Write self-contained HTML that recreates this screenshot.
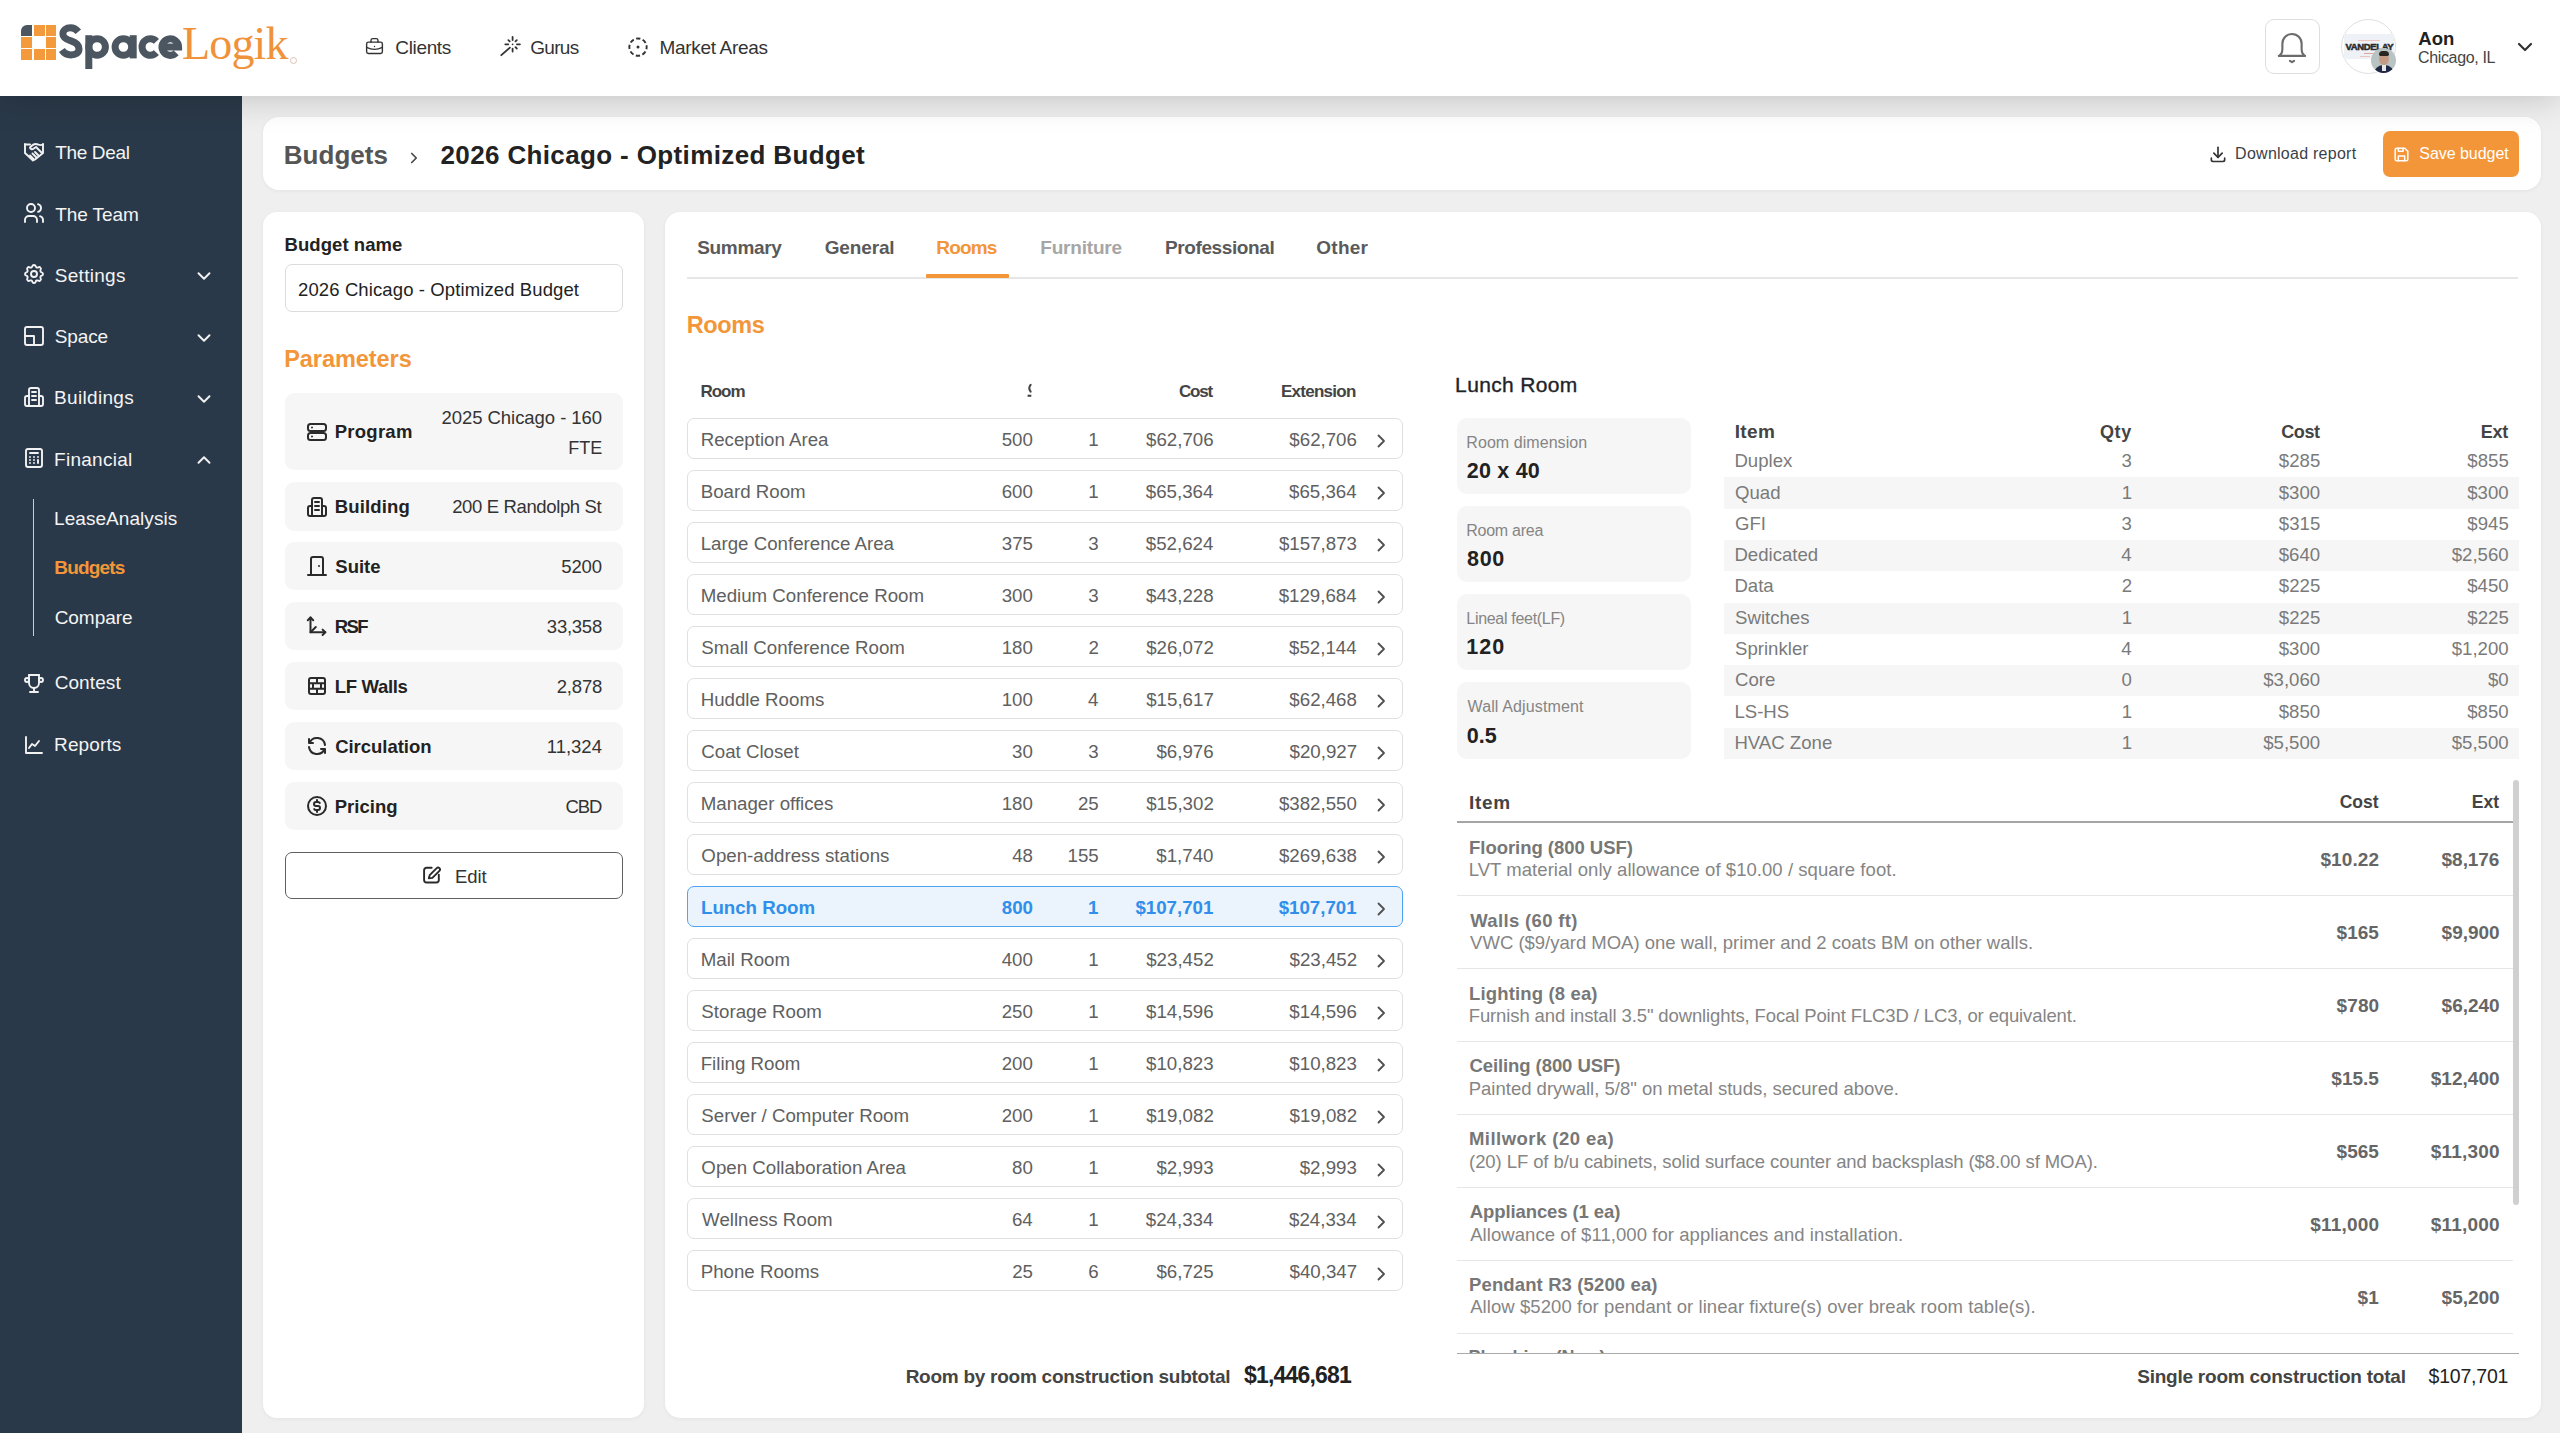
<!DOCTYPE html><html><head><meta charset="utf-8"><style>
html,body{margin:0;padding:0}
body{width:2560px;height:1433px;overflow:hidden;position:relative;background:#efefef;font-family:'Liberation Sans',sans-serif}
.t{position:absolute;white-space:nowrap}
.b{position:absolute;box-sizing:border-box}
</style></head><body>
<div class="b" style="left:0px;top:0px;width:2560px;height:96px;background:#fff;box-shadow:0 0 36px rgba(0,0,0,0.22);z-index:2"></div>
<div class="b" style="left:0;top:0;width:2560px;height:96px;z-index:3">
<div class="b" style="left:21px;top:25px;width:11.2px;height:10.8px;background:#4b5661;border-top-left-radius:6px;"></div><div class="b" style="left:33.6px;top:25px;width:11.0px;height:10.8px;background:#f39a3d;"></div><div class="b" style="left:45.8px;top:25px;width:10.0px;height:10.8px;background:#f39a3d;"></div><div class="b" style="left:21px;top:37px;width:11.2px;height:10.9px;background:#f39a3d;"></div><div class="b" style="left:45.8px;top:37px;width:10.0px;height:10.9px;background:#f39a3d;"></div><div class="b" style="left:21px;top:49px;width:11.2px;height:10.8px;background:#f39a3d;"></div><div class="b" style="left:33.6px;top:49px;width:11.0px;height:10.8px;background:#f39a3d;"></div><div class="b" style="left:45.8px;top:49px;width:10.0px;height:10.8px;background:#f39a3d;"></div>
<svg class="b" style="left:0;top:0" width="200" height="80" viewBox="0 0 200 80" fill="none" stroke="#4b5661" stroke-width="7"><path d="M78.3 31.8 C76.2 29.2 73.6 27.8 70.4 27.8 C66.2 27.8 62.9 30.3 62.9 33.9 C62.9 37.8 66.6 39.4 71 40.9 C75.9 42.5 79 44.9 79 49 C79 52.9 75.7 54.9 70.9 54.9 C66.9 54.9 63.9 53.1 61.9 50"/><path d="M88.8 35.2V69" stroke-linecap="butt"/><circle cx="97.1" cy="47" r="8.3"/><circle cx="123.4" cy="47" r="8.3"/><path d="M133.2 35.2V58.4" stroke-linecap="butt"/><path d="M156.4 41.3 A8.3 8.3 0 1 0 156.4 52.7"/><path d="M163.5 47 H178.6 A8.3 8.3 0 1 0 176.2 52.9"/></svg>
<div class="t " style="left:182.12px;top:21.18px;font-size:46px;line-height:46px;color:#f0923a;font-family:'Liberation Serif', serif;letter-spacing:-0.890px;">Logik</div>
<div class="b" style="left:290px;top:56.5px;width:7px;height:7px;border:1px solid #dcc2b0;border-radius:50%"></div>
<svg class="b" style="left:364px;top:36px" width="21" height="21" viewBox="0 0 24 24" fill="none" stroke="#333" stroke-width="1.6" stroke-linecap="round" stroke-linejoin="round"><rect x="3" y="7" width="18" height="13" rx="2"/><path d="M8 7v-2a2 2 0 0 1 2 -2h4a2 2 0 0 1 2 2v2"/><path d="M12 12v.01"/><path d="M3 13a20 20 0 0 0 18 0"/></svg>
<div class="t " style="left:395.25px;top:37.92px;font-size:19px;line-height:19px;color:#333;font-family:'Liberation Sans', sans-serif;letter-spacing:-0.338px;">Clients</div>
<svg class="b" style="left:498px;top:34px" width="24" height="24" viewBox="0 0 24 24" fill="none" stroke="#333" stroke-width="1.8" stroke-linecap="round" stroke-linejoin="round"><path d="M3.3 21.2L11.9 13.6"/><path d="M14.6 3v3M14.6 14.6v3M7.3 10.3h3M18.9 10.3h3M17.5 7.4l1.3 -1.3M11.7 7.4l-1.3 -1.3M17.5 13.2l1.3 1.3"/><path d="M14.6 10.3v.01"/></svg>
<div class="t " style="left:530.25px;top:37.92px;font-size:19px;line-height:19px;color:#333;font-family:'Liberation Sans', sans-serif;letter-spacing:-0.715px;">Gurus</div>
<svg class="b" style="left:626px;top:35px" width="24" height="24" viewBox="0 0 24 24" fill="none" stroke="#333" stroke-width="1.9" stroke-linecap="round" stroke-linejoin="round"><circle cx="12" cy="12.1" r="8.65" stroke-dasharray="4.3 2.49" stroke-dashoffset="2.15" stroke-linecap="butt"/><circle cx="12" cy="12.1" r="1.5" fill="#333" stroke="none"/></svg>
<div class="t " style="left:659.48px;top:38.22px;font-size:19px;line-height:19px;color:#333;font-family:'Liberation Sans', sans-serif;letter-spacing:-0.320px;">Market Areas</div>
<div class="b" style="left:2265px;top:19px;width:55px;height:55px;border:1.5px solid #dedede;border-radius:9px;background:#fff"></div>
<svg class="b" style="left:2271.3px;top:26.6px" width="42" height="42" viewBox="0 0 24 24" fill="none" stroke="#6b6b6b" stroke-width="1.2" stroke-linecap="round" stroke-linejoin="round"><path d="M4.5 16.5h15c-1.3 -.8 -2 -2.2 -2 -4v-3a5.5 5.5 0 0 0 -11 0v3c0 1.8 -.7 3.2 -2 4z"/><path d="M10.8 19.3l1.2 .8l1.2 -.8"/></svg>
<div class="b" style="left:2341px;top:19px;width:55px;height:55px;border:1.5px solid #e0e0e0;border-radius:50%;background:#fff;overflow:hidden"></div>
<div class="b" style="left:2344px;top:34px;width:50px;height:25px;background:#eef2f7"></div>
<div class="t " style="left:2345.45px;top:41.96px;font-size:9.5px;line-height:9.5px;color:#2a2a2a;font-family:'Liberation Sans', sans-serif;font-weight:700;letter-spacing:-0.356px;-webkit-text-stroke:0.5px #2a2a2a;">VANDELAY</div>
<div class="b" style="left:2358px;top:39.5px;width:22px;height:1px;background:#ecc4be"></div>
<div class="b" style="left:2364px;top:52.5px;width:12px;height:1.5px;background:#e0a49c"></div>
<div class="b" style="left:2360px;top:56px;width:10px;height:1px;background:#ecc4be"></div>
<div class="b" style="left:2371px;top:48px;width:25px;height:25px;border-radius:50%;background:#b9c3c4;overflow:hidden"><div class="b" style="left:8px;top:5px;width:10px;height:12px;border-radius:50%;background:#c49a82"></div><div class="b" style="left:8px;top:3px;width:10px;height:5px;border-radius:5px 5px 2px 2px;background:#2b2522"></div><div class="b" style="left:3px;top:17px;width:20px;height:10px;border-radius:9px 9px 0 0;background:#1f2742"></div><div class="b" style="left:11px;top:17px;width:4px;height:6px;background:#e8e8e8"></div></div>
<div class="t " style="left:2418.34px;top:29.54px;font-size:18.5px;line-height:18.5px;color:#222;font-family:'Liberation Sans', sans-serif;font-weight:700;letter-spacing:0.045px;">Aon</div>
<div class="t " style="left:2418.00px;top:50.36px;font-size:16px;line-height:16px;color:#444;font-family:'Liberation Sans', sans-serif;letter-spacing:-0.348px;">Chicago, IL</div>
<svg class="b" style="left:2513px;top:35px" width="24" height="24" viewBox="0 0 24 24" fill="none" stroke="#333" stroke-width="2.2" stroke-linecap="round" stroke-linejoin="round"><path d="M6 9l6 6l6 -6"/></svg>
</div>
<div class="b" style="left:0px;top:96px;width:242px;height:1337px;background:#2a3949"></div>
<svg class="b" style="left:22px;top:139.6px" width="24" height="24" viewBox="0 0 24 24" fill="none" stroke="#f2f2f2" stroke-width="1.9" stroke-linecap="round" stroke-linejoin="round"><path d="M3 4v9l8 7.5l2 -1l8 -6.5v-9"/><path d="M3 4.5h5"/><path d="M21 4.5c-1.5 .7 -3.5 .7 -5 0c-2.5 -1 -4.5 -.5 -6.5 1.5l-1.5 1.5c.3 1.5 2 2.2 3.5 1.2l2.5 -1.7l5.5 5.5"/><path d="M8 15.5l3.5 3.5M10.5 13.5l4 4M13 12l3.5 3.5"/></svg>
<div class="t " style="left:55.22px;top:143.02px;font-size:19px;line-height:19px;color:#f4f4f4;font-family:'Liberation Sans', sans-serif;letter-spacing:-0.347px;">The Deal</div>
<svg class="b" style="left:22px;top:201.1px" width="24" height="24" viewBox="0 0 24 24" fill="none" stroke="#f2f2f2" stroke-width="1.9" stroke-linecap="round" stroke-linejoin="round"><circle cx="9" cy="7" r="4"/><path d="M3 21v-2a4 4 0 0 1 4 -4h4a4 4 0 0 1 4 4v2"/><path d="M16 3.13a4 4 0 0 1 0 7.75"/><path d="M21 21v-2a4 4 0 0 0 -3 -3.85"/></svg>
<div class="t " style="left:55.22px;top:204.52px;font-size:19px;line-height:19px;color:#f4f4f4;font-family:'Liberation Sans', sans-serif;letter-spacing:-0.079px;">The Team</div>
<svg class="b" style="left:22px;top:262.1px" width="24" height="24" viewBox="0 0 24 24" fill="none" stroke="#f2f2f2" stroke-width="1.9" stroke-linecap="round" stroke-linejoin="round"><path d="M10.325 4.317c.426 -1.756 2.924 -1.756 3.35 0a1.724 1.724 0 0 0 2.573 1.066c1.543 -.94 3.31 .826 2.37 2.37a1.724 1.724 0 0 0 1.065 2.572c1.756 .426 1.756 2.924 0 3.35a1.724 1.724 0 0 0 -1.066 2.573c.94 1.543 -.826 3.31 -2.37 2.37a1.724 1.724 0 0 0 -2.572 1.065c-.426 1.756 -2.924 1.756 -3.35 0a1.724 1.724 0 0 0 -2.573 -1.066c-1.543 .94 -3.31 -.826 -2.37 -2.370a1.724 1.724 0 0 0 -1.065 -2.572c-1.756 -.426 -1.756 -2.924 0 -3.35a1.724 1.724 0 0 0 1.066 -2.573c-.94 -1.543 .826 -3.31 2.37 -2.37c1 .608 2.296 .07 2.572 -1.065z"/><circle cx="12" cy="12" r="3"/></svg>
<div class="t " style="left:54.75px;top:265.52px;font-size:19px;line-height:19px;color:#f4f4f4;font-family:'Liberation Sans', sans-serif;letter-spacing:0.291px;">Settings</div>
<svg class="b" style="left:193.2px;top:265.1px" width="22" height="22" viewBox="0 0 24 24" fill="none" stroke="#f2f2f2" stroke-width="2.1" stroke-linecap="round" stroke-linejoin="round"><path d="M6 9l6 6l6 -6"/></svg>
<svg class="b" style="left:22px;top:323.5px" width="24" height="24" viewBox="0 0 24 24" fill="none" stroke="#f2f2f2" stroke-width="1.9" stroke-linecap="round" stroke-linejoin="round"><rect x="3" y="3" width="18" height="18" rx="2"/><path d="M3 12h9v9"/></svg>
<div class="t " style="left:54.75px;top:326.92px;font-size:19px;line-height:19px;color:#f4f4f4;font-family:'Liberation Sans', sans-serif;letter-spacing:-0.113px;">Space</div>
<svg class="b" style="left:193.2px;top:326.5px" width="22" height="22" viewBox="0 0 24 24" fill="none" stroke="#f2f2f2" stroke-width="2.1" stroke-linecap="round" stroke-linejoin="round"><path d="M6 9l6 6l6 -6"/></svg>
<svg class="b" style="left:22px;top:384.9px" width="24" height="24" viewBox="0 0 24 24" fill="none" stroke="#f2f2f2" stroke-width="1.9" stroke-linecap="round" stroke-linejoin="round"><path d="M7 21v-16a2 2 0 0 1 2 -2h6a2 2 0 0 1 2 2v16z"/><path d="M7 11h-2a2 2 0 0 0 -2 2v6a2 2 0 0 0 2 2h2"/><path d="M17 11h2a2 2 0 0 1 2 2v6a2 2 0 0 1 -2 2h-2"/><path d="M10 7h4M10 11h4M10 15h4"/></svg>
<div class="t " style="left:54.08px;top:388.32px;font-size:19px;line-height:19px;color:#f4f4f4;font-family:'Liberation Sans', sans-serif;letter-spacing:0.318px;">Buildings</div>
<svg class="b" style="left:193.2px;top:387.9px" width="22" height="22" viewBox="0 0 24 24" fill="none" stroke="#f2f2f2" stroke-width="2.1" stroke-linecap="round" stroke-linejoin="round"><path d="M6 9l6 6l6 -6"/></svg>
<svg class="b" style="left:22px;top:446.3px" width="24" height="24" viewBox="0 0 24 24" fill="none" stroke="#f2f2f2" stroke-width="1.9" stroke-linecap="round" stroke-linejoin="round"><rect x="4" y="3" width="16" height="18" rx="2"/><path d="M8 7h8"/><path d="M8 11v.01M12 11v.01M16 11v.01M8 14v.01M12 14v.01M8 17v.01M12 17v.01M16 14v3"/></svg>
<div class="t " style="left:54.08px;top:449.72px;font-size:19px;line-height:19px;color:#f4f4f4;font-family:'Liberation Sans', sans-serif;letter-spacing:0.257px;">Financial</div>
<svg class="b" style="left:193.2px;top:449.3px" width="22" height="22" viewBox="0 0 24 24" fill="none" stroke="#f2f2f2" stroke-width="2.1" stroke-linecap="round" stroke-linejoin="round"><path d="M6 15l6 -6l6 6"/></svg>
<div class="b" style="left:33px;top:499px;width:1px;height:137px;background:#c9cdd2"></div>
<div class="t " style="left:54.08px;top:508.72px;font-size:19px;line-height:19px;color:#f4f4f4;font-family:'Liberation Sans', sans-serif;letter-spacing:0.053px;">LeaseAnalysis</div>
<div class="t " style="left:54.27px;top:557.92px;font-size:19px;line-height:19px;color:#f39639;font-family:'Liberation Sans', sans-serif;font-weight:700;letter-spacing:-0.834px;">Budgets</div>
<div class="t " style="left:54.65px;top:607.72px;font-size:19px;line-height:19px;color:#f4f4f4;font-family:'Liberation Sans', sans-serif;letter-spacing:-0.030px;">Compare</div>
<svg class="b" style="left:22px;top:670.5px" width="24" height="24" viewBox="0 0 24 24" fill="none" stroke="#f2f2f2" stroke-width="1.9" stroke-linecap="round" stroke-linejoin="round"><path d="M8 21h8"/><path d="M12 17v4"/><path d="M7 4h10"/><path d="M17 4v8a5 5 0 0 1 -10 0v-8"/><circle cx="5" cy="9" r="2"/><circle cx="19" cy="9" r="2"/></svg>
<div class="t " style="left:54.65px;top:673.42px;font-size:19px;line-height:19px;color:#f4f4f4;font-family:'Liberation Sans', sans-serif;letter-spacing:0.098px;">Contest</div>
<svg class="b" style="left:22px;top:732.5px" width="24" height="24" viewBox="0 0 24 24" fill="none" stroke="#f2f2f2" stroke-width="1.9" stroke-linecap="round" stroke-linejoin="round"><path d="M4 4v16h16"/><path d="M7 15l3 -4l3 2l4 -5"/></svg>
<div class="t " style="left:54.08px;top:734.92px;font-size:19px;line-height:19px;color:#f4f4f4;font-family:'Liberation Sans', sans-serif;letter-spacing:0.114px;">Reports</div>
<div class="b" style="left:263px;top:117px;width:2278px;height:73px;background:#fff;border-radius:16px;box-shadow:0 1px 4px rgba(0,0,0,0.05)"></div>
<div class="t " style="left:283.81px;top:141.99px;font-size:26px;line-height:26px;color:#555;font-family:'Liberation Sans', sans-serif;font-weight:700;letter-spacing:0.038px;">Budgets</div>
<svg class="b" style="left:405px;top:149px" width="18" height="18" viewBox="0 0 24 24" fill="none" stroke="#444" stroke-width="2.2" stroke-linecap="round" stroke-linejoin="round"><path d="M9 6l6 6l-6 6"/></svg>
<div class="t " style="left:440.49px;top:141.99px;font-size:26px;line-height:26px;color:#222;font-family:'Liberation Sans', sans-serif;font-weight:700;letter-spacing:0.368px;">2026 Chicago - Optimized Budget</div>
<svg class="b" style="left:2208px;top:144px" width="20" height="20" viewBox="0 0 24 24" fill="none" stroke="#333" stroke-width="2" stroke-linecap="round" stroke-linejoin="round"><path d="M4 17v2a2 2 0 0 0 2 2h12a2 2 0 0 0 2 -2v-2"/><path d="M7 11l5 5l5 -5"/><path d="M12 4v12"/></svg>
<div class="t " style="left:2235.12px;top:145.76px;font-size:16px;line-height:16px;color:#3b3f48;font-family:'Liberation Sans', sans-serif;letter-spacing:0.257px;">Download report</div>
<div class="b" style="left:2383px;top:131px;width:136px;height:46px;background:#f39639;border-radius:7px"></div>
<svg class="b" style="left:2392px;top:144.5px" width="19" height="19" viewBox="0 0 24 24" fill="none" stroke="#fff" stroke-width="1.9" stroke-linecap="round" stroke-linejoin="round"><path d="M6 4h10l4 4v10a2 2 0 0 1 -2 2h-12a2 2 0 0 1 -2 -2v-12a2 2 0 0 1 2 -2"/><path d="M8 20v-6h8v6"/><path d="M14 4v4h-6v-4"/></svg>
<div class="t " style="left:2419.28px;top:145.76px;font-size:16px;line-height:16px;color:#fff;font-family:'Liberation Sans', sans-serif;letter-spacing:-0.044px;">Save budget</div>
<div class="b" style="left:263px;top:211.5px;width:381px;height:1206.5px;background:#fff;border-radius:14px;box-shadow:0 1px 4px rgba(0,0,0,0.05)"></div>
<div class="t " style="left:284.50px;top:235.94px;font-size:18.5px;line-height:18.5px;color:#222;font-family:'Liberation Sans', sans-serif;font-weight:700;letter-spacing:0.066px;">Budget name</div>
<div class="b" style="left:285px;top:264px;width:338px;height:48px;border:1px solid #dcdcdc;border-radius:7px;background:#fff"></div>
<div class="t " style="left:298.07px;top:280.64px;font-size:18.5px;line-height:18.5px;color:#222;font-family:'Liberation Sans', sans-serif;letter-spacing:0.108px;">2026 Chicago - Optimized Budget</div>
<div class="t " style="left:284.17px;top:347.61px;font-size:23.5px;line-height:23.5px;color:#f39639;font-family:'Liberation Sans', sans-serif;font-weight:700;letter-spacing:-0.054px;">Parameters</div>
<div class="b" style="left:285px;top:393px;width:338px;height:77px;background:#f6f6f6;border-radius:9px"></div>
<svg class="b" style="left:305px;top:419.5px" width="24" height="24" viewBox="0 0 24 24" fill="none" stroke="#2a2a2a" stroke-width="2" stroke-linecap="round" stroke-linejoin="round"><rect x="3" y="4" width="18" height="7" rx="2.5"/><rect x="3" y="13" width="18" height="7" rx="2.5"/><path d="M7 7.5v.01M7 16.5v.01"/></svg>
<div class="t " style="left:334.70px;top:423.04px;font-size:18.5px;line-height:18.5px;color:#222;font-family:'Liberation Sans', sans-serif;font-weight:700;letter-spacing:0.264px;">Program</div>
<div class="b" style="left:285px;top:482px;width:338px;height:49px;background:#f6f6f6;border-radius:9px"></div>
<svg class="b" style="left:305px;top:494.5px" width="24" height="24" viewBox="0 0 24 24" fill="none" stroke="#2a2a2a" stroke-width="2" stroke-linecap="round" stroke-linejoin="round"><path d="M7 21v-16a2 2 0 0 1 2 -2h6a2 2 0 0 1 2 2v16z"/><path d="M7 11h-2a2 2 0 0 0 -2 2v6a2 2 0 0 0 2 2h2"/><path d="M17 11h2a2 2 0 0 1 2 2v6a2 2 0 0 1 -2 2h-2"/><path d="M10 7h4M10 11h4M10 15h4"/></svg>
<div class="t " style="left:334.70px;top:498.04px;font-size:18.5px;line-height:18.5px;color:#222;font-family:'Liberation Sans', sans-serif;font-weight:700;letter-spacing:0.144px;">Building</div>
<div class="t " style="left:452.18px;top:498.04px;font-size:18.5px;line-height:18.5px;color:#333;font-family:'Liberation Sans', sans-serif;letter-spacing:-0.362px;">200 E Randolph St</div>
<div class="b" style="left:285px;top:542px;width:338px;height:48px;background:#f6f6f6;border-radius:9px"></div>
<svg class="b" style="left:305px;top:554.0px" width="24" height="24" viewBox="0 0 24 24" fill="none" stroke="#2a2a2a" stroke-width="2" stroke-linecap="round" stroke-linejoin="round"><path d="M14 12v.01"/><path d="M3 21h18"/><path d="M6 21v-16a2 2 0 0 1 2 -2h8a2 2 0 0 1 2 2v16"/></svg>
<div class="t " style="left:335.34px;top:557.54px;font-size:18.5px;line-height:18.5px;color:#222;font-family:'Liberation Sans', sans-serif;font-weight:700;letter-spacing:-0.006px;">Suite</div>
<div class="t " style="left:561.16px;top:557.54px;font-size:18.5px;line-height:18.5px;color:#333;font-family:'Liberation Sans', sans-serif;letter-spacing:-0.058px;">5200</div>
<div class="b" style="left:285px;top:602px;width:338px;height:48px;background:#f6f6f6;border-radius:9px"></div>
<svg class="b" style="left:305px;top:614.0px" width="24" height="24" viewBox="0 0 24 24" fill="none" stroke="#2a2a2a" stroke-width="2" stroke-linecap="round" stroke-linejoin="round"><path d="M5.5 3.5v14.8h14.8"/><path d="M2.8 6.2l2.7 -2.7l2.7 2.7"/><path d="M17.6 15.6l2.7 2.7l-2.7 2.7"/><path d="M5.5 18.3l5.3 -5.3"/></svg>
<div class="t " style="left:334.70px;top:617.54px;font-size:18.5px;line-height:18.5px;color:#222;font-family:'Liberation Sans', sans-serif;font-weight:700;letter-spacing:-1.575px;">RSF</div>
<div class="t " style="left:546.85px;top:617.54px;font-size:18.5px;line-height:18.5px;color:#333;font-family:'Liberation Sans', sans-serif;letter-spacing:-0.244px;">33,358</div>
<div class="b" style="left:285px;top:662px;width:338px;height:48px;background:#f6f6f6;border-radius:9px"></div>
<svg class="b" style="left:305px;top:674.0px" width="24" height="24" viewBox="0 0 24 24" fill="none" stroke="#2a2a2a" stroke-width="2" stroke-linecap="round" stroke-linejoin="round"><rect x="4" y="4" width="16" height="16" rx="2"/><path d="M4 9.3h16M4 14.7h16M12 4v5.3M8 9.3v5.4M16 9.3v5.4M12 14.7v5.3"/></svg>
<div class="t " style="left:334.70px;top:677.54px;font-size:18.5px;line-height:18.5px;color:#222;font-family:'Liberation Sans', sans-serif;font-weight:700;letter-spacing:-0.321px;">LF Walls</div>
<div class="t " style="left:556.68px;top:677.54px;font-size:18.5px;line-height:18.5px;color:#333;font-family:'Liberation Sans', sans-serif;letter-spacing:-0.171px;">2,878</div>
<div class="b" style="left:285px;top:722px;width:338px;height:48px;background:#f6f6f6;border-radius:9px"></div>
<svg class="b" style="left:305px;top:734.0px" width="24" height="24" viewBox="0 0 24 24" fill="none" stroke="#2a2a2a" stroke-width="2" stroke-linecap="round" stroke-linejoin="round"><path d="M20 11a8.1 8.1 0 0 0 -15.5 -2m-.5 -4v4h4"/><path d="M4 13a8.1 8.1 0 0 0 15.5 2m.5 4v-4h-4"/></svg>
<div class="t " style="left:335.16px;top:737.54px;font-size:18.5px;line-height:18.5px;color:#222;font-family:'Liberation Sans', sans-serif;font-weight:700;letter-spacing:-0.032px;">Circulation</div>
<div class="t " style="left:546.81px;top:737.54px;font-size:18.5px;line-height:18.5px;color:#333;font-family:'Liberation Sans', sans-serif;letter-spacing:-0.014px;">11,324</div>
<div class="b" style="left:285px;top:782px;width:338px;height:48px;background:#f6f6f6;border-radius:9px"></div>
<svg class="b" style="left:305px;top:794.0px" width="24" height="24" viewBox="0 0 24 24" fill="none" stroke="#2a2a2a" stroke-width="2" stroke-linecap="round" stroke-linejoin="round"><circle cx="12" cy="12" r="9"/><path d="M14.8 9a2 2 0 0 0 -1.8 -1h-2a2 2 0 1 0 0 4h2a2 2 0 1 1 0 4h-2a2 2 0 0 1 -1.8 -1"/><path d="M12 6v2M12 16v2"/></svg>
<div class="t " style="left:334.70px;top:797.54px;font-size:18.5px;line-height:18.5px;color:#222;font-family:'Liberation Sans', sans-serif;font-weight:700;letter-spacing:0.032px;">Pricing</div>
<div class="t " style="left:565.48px;top:797.54px;font-size:18.5px;line-height:18.5px;color:#333;font-family:'Liberation Sans', sans-serif;letter-spacing:-1.089px;">CBD</div>
<div class="t " style="left:441.47px;top:409.04px;font-size:18.5px;line-height:18.5px;color:#333;font-family:'Liberation Sans', sans-serif;letter-spacing:-0.049px;">2025 Chicago - 160</div>
<div class="t " style="left:568.29px;top:438.76px;font-size:18px;line-height:18px;color:#333;font-family:'Liberation Sans', sans-serif;">FTE</div>
<div class="b" style="left:285px;top:852px;width:338px;height:47px;border:1.5px solid #606060;border-radius:7px;background:#fff"></div>
<svg class="b" style="left:420px;top:863px" width="24" height="24" viewBox="0 0 24 24" fill="none" stroke="#2a2a2a" stroke-width="1.9" stroke-linecap="round" stroke-linejoin="round"><path d="M11.7 4.8H6.6a2.5 2.5 0 0 0 -2.5 2.5V17a2.5 2.5 0 0 0 2.5 2.5H16.3a2.5 2.5 0 0 0 2.5 -2.5V11.6"/><path d="M8.8 15.2l.9 -3l7 -7a1.9 1.9 0 0 1 2.7 2.7l-7 7z"/></svg>
<div class="t " style="left:454.92px;top:868.04px;font-size:18.5px;line-height:18.5px;color:#333;font-family:'Liberation Sans', sans-serif;letter-spacing:-0.016px;">Edit</div>
<div class="b" style="left:665px;top:211.5px;width:1876px;height:1206.5px;background:#fff;border-radius:15px;box-shadow:0 1px 4px rgba(0,0,0,0.05)"></div>
<div class="b" style="left:687px;top:277px;width:1831px;height:2px;background:#e6e6e6"></div>
<div class="t " style="left:697.23px;top:237.62px;font-size:19px;line-height:19px;color:#5a5a5a;font-family:'Liberation Sans', sans-serif;font-weight:700;letter-spacing:-0.330px;">Summary</div>
<div class="t " style="left:824.74px;top:237.62px;font-size:19px;line-height:19px;color:#5a5a5a;font-family:'Liberation Sans', sans-serif;font-weight:700;letter-spacing:-0.148px;">General</div>
<div class="t " style="left:936.37px;top:237.62px;font-size:19px;line-height:19px;color:#f39639;font-family:'Liberation Sans', sans-serif;font-weight:700;letter-spacing:-0.854px;">Rooms</div>
<div class="t " style="left:1040.27px;top:237.62px;font-size:19px;line-height:19px;color:#a6a6a6;font-family:'Liberation Sans', sans-serif;font-weight:700;letter-spacing:-0.188px;">Furniture</div>
<div class="t " style="left:1164.97px;top:237.62px;font-size:19px;line-height:19px;color:#5a5a5a;font-family:'Liberation Sans', sans-serif;font-weight:700;letter-spacing:-0.394px;">Professional</div>
<div class="t " style="left:1316.34px;top:237.62px;font-size:19px;line-height:19px;color:#5a5a5a;font-family:'Liberation Sans', sans-serif;font-weight:700;letter-spacing:0.229px;">Other</div>
<div class="b" style="left:926px;top:274px;width:83px;height:3.5px;background:#f39639;border-radius:1px"></div>
<div class="t " style="left:686.67px;top:313.71px;font-size:23.5px;line-height:23.5px;color:#f39639;font-family:'Liberation Sans', sans-serif;font-weight:700;letter-spacing:-0.374px;">Rooms</div>
<div class="t " style="left:700.50px;top:382.51px;font-size:17px;line-height:17px;color:#444;font-family:'Liberation Sans', sans-serif;font-weight:700;letter-spacing:-1.023px;">Room</div>
<svg class="b" style="left:1025px;top:383px" width="10" height="16" viewBox="0 0 10 16" fill="none"><path d="M5.6 1.8 Q2.9 5.2 5.6 8.6" stroke="#444" stroke-width="2.1" stroke-linecap="round"/><rect x="2.6" y="11.7" width="3.7" height="2.1" fill="#444"/></svg>
<div class="t " style="left:1178.92px;top:382.51px;font-size:17px;line-height:17px;color:#444;font-family:'Liberation Sans', sans-serif;font-weight:700;letter-spacing:-1.197px;">Cost</div>
<div class="t " style="left:1280.89px;top:382.51px;font-size:17px;line-height:17px;color:#444;font-family:'Liberation Sans', sans-serif;font-weight:700;letter-spacing:-0.717px;">Extension</div>
<div class="b" style="left:687px;top:417.6px;width:716px;height:41px;background:#fff;border:1px solid #e0e0e0;border-radius:7px"></div>
<div class="t " style="left:700.70px;top:430.97px;font-size:18.7px;line-height:18.7px;color:#606060;font-family:'Liberation Sans', sans-serif;">Reception Area</div>
<div class="t " style="left:1001.72px;top:430.97px;font-size:18.7px;line-height:18.7px;color:#606060;font-family:'Liberation Sans', sans-serif;">500</div>
<div class="t " style="left:1088.36px;top:430.97px;font-size:18.7px;line-height:18.7px;color:#606060;font-family:'Liberation Sans', sans-serif;">1</div>
<div class="t " style="left:1146.05px;top:430.97px;font-size:18.7px;line-height:18.7px;color:#606060;font-family:'Liberation Sans', sans-serif;">$62,706</div>
<div class="t " style="left:1289.35px;top:430.97px;font-size:18.7px;line-height:18.7px;color:#606060;font-family:'Liberation Sans', sans-serif;">$62,706</div>
<svg class="b" style="left:1375.5px;top:434.1px" width="14" height="14" viewBox="0 0 14 14" fill="none" stroke="#505050" stroke-width="1.8" stroke-linecap="round" stroke-linejoin="round"><path d="M2.5 1.5l5.5 5.5l-5.5 5.5"/></svg>
<div class="b" style="left:687px;top:469.6px;width:716px;height:41px;background:#fff;border:1px solid #e0e0e0;border-radius:7px"></div>
<div class="t " style="left:700.70px;top:483.00px;font-size:18.7px;line-height:18.7px;color:#606060;font-family:'Liberation Sans', sans-serif;">Board Room</div>
<div class="t " style="left:1001.72px;top:483.00px;font-size:18.7px;line-height:18.7px;color:#606060;font-family:'Liberation Sans', sans-serif;">600</div>
<div class="t " style="left:1088.36px;top:483.00px;font-size:18.7px;line-height:18.7px;color:#606060;font-family:'Liberation Sans', sans-serif;">1</div>
<div class="t " style="left:1145.77px;top:483.00px;font-size:18.7px;line-height:18.7px;color:#606060;font-family:'Liberation Sans', sans-serif;">$65,364</div>
<div class="t " style="left:1289.07px;top:483.00px;font-size:18.7px;line-height:18.7px;color:#606060;font-family:'Liberation Sans', sans-serif;">$65,364</div>
<svg class="b" style="left:1375.5px;top:486.13px" width="14" height="14" viewBox="0 0 14 14" fill="none" stroke="#505050" stroke-width="1.8" stroke-linecap="round" stroke-linejoin="round"><path d="M2.5 1.5l5.5 5.5l-5.5 5.5"/></svg>
<div class="b" style="left:687px;top:521.7px;width:716px;height:41px;background:#fff;border:1px solid #e0e0e0;border-radius:7px"></div>
<div class="t " style="left:700.70px;top:535.03px;font-size:18.7px;line-height:18.7px;color:#606060;font-family:'Liberation Sans', sans-serif;">Large Conference Area</div>
<div class="t " style="left:1001.81px;top:535.03px;font-size:18.7px;line-height:18.7px;color:#606060;font-family:'Liberation Sans', sans-serif;">375</div>
<div class="t " style="left:1088.27px;top:535.03px;font-size:18.7px;line-height:18.7px;color:#606060;font-family:'Liberation Sans', sans-serif;">3</div>
<div class="t " style="left:1145.77px;top:535.03px;font-size:18.7px;line-height:18.7px;color:#606060;font-family:'Liberation Sans', sans-serif;">$52,624</div>
<div class="t " style="left:1278.97px;top:535.03px;font-size:18.7px;line-height:18.7px;color:#606060;font-family:'Liberation Sans', sans-serif;">$157,873</div>
<svg class="b" style="left:1375.5px;top:538.1600000000001px" width="14" height="14" viewBox="0 0 14 14" fill="none" stroke="#505050" stroke-width="1.8" stroke-linecap="round" stroke-linejoin="round"><path d="M2.5 1.5l5.5 5.5l-5.5 5.5"/></svg>
<div class="b" style="left:687px;top:573.7px;width:716px;height:41px;background:#fff;border:1px solid #e0e0e0;border-radius:7px"></div>
<div class="t " style="left:700.70px;top:587.06px;font-size:18.7px;line-height:18.7px;color:#606060;font-family:'Liberation Sans', sans-serif;">Medium Conference Room</div>
<div class="t " style="left:1001.72px;top:587.06px;font-size:18.7px;line-height:18.7px;color:#606060;font-family:'Liberation Sans', sans-serif;">300</div>
<div class="t " style="left:1088.27px;top:587.06px;font-size:18.7px;line-height:18.7px;color:#606060;font-family:'Liberation Sans', sans-serif;">3</div>
<div class="t " style="left:1146.05px;top:587.06px;font-size:18.7px;line-height:18.7px;color:#606060;font-family:'Liberation Sans', sans-serif;">$43,228</div>
<div class="t " style="left:1278.69px;top:587.06px;font-size:18.7px;line-height:18.7px;color:#606060;font-family:'Liberation Sans', sans-serif;">$129,684</div>
<svg class="b" style="left:1375.5px;top:590.19px" width="14" height="14" viewBox="0 0 14 14" fill="none" stroke="#505050" stroke-width="1.8" stroke-linecap="round" stroke-linejoin="round"><path d="M2.5 1.5l5.5 5.5l-5.5 5.5"/></svg>
<div class="b" style="left:687px;top:625.7px;width:716px;height:41px;background:#fff;border:1px solid #e0e0e0;border-radius:7px"></div>
<div class="t " style="left:701.36px;top:639.09px;font-size:18.7px;line-height:18.7px;color:#606060;font-family:'Liberation Sans', sans-serif;">Small Conference Room</div>
<div class="t " style="left:1001.72px;top:639.09px;font-size:18.7px;line-height:18.7px;color:#606060;font-family:'Liberation Sans', sans-serif;">180</div>
<div class="t " style="left:1088.46px;top:639.09px;font-size:18.7px;line-height:18.7px;color:#606060;font-family:'Liberation Sans', sans-serif;">2</div>
<div class="t " style="left:1146.23px;top:639.09px;font-size:18.7px;line-height:18.7px;color:#606060;font-family:'Liberation Sans', sans-serif;">$26,072</div>
<div class="t " style="left:1289.07px;top:639.09px;font-size:18.7px;line-height:18.7px;color:#606060;font-family:'Liberation Sans', sans-serif;">$52,144</div>
<svg class="b" style="left:1375.5px;top:642.22px" width="14" height="14" viewBox="0 0 14 14" fill="none" stroke="#505050" stroke-width="1.8" stroke-linecap="round" stroke-linejoin="round"><path d="M2.5 1.5l5.5 5.5l-5.5 5.5"/></svg>
<div class="b" style="left:687px;top:677.8px;width:716px;height:41px;background:#fff;border:1px solid #e0e0e0;border-radius:7px"></div>
<div class="t " style="left:700.70px;top:691.12px;font-size:18.7px;line-height:18.7px;color:#606060;font-family:'Liberation Sans', sans-serif;">Huddle Rooms</div>
<div class="t " style="left:1001.72px;top:691.12px;font-size:18.7px;line-height:18.7px;color:#606060;font-family:'Liberation Sans', sans-serif;">100</div>
<div class="t " style="left:1087.99px;top:691.12px;font-size:18.7px;line-height:18.7px;color:#606060;font-family:'Liberation Sans', sans-serif;">4</div>
<div class="t " style="left:1146.23px;top:691.12px;font-size:18.7px;line-height:18.7px;color:#606060;font-family:'Liberation Sans', sans-serif;">$15,617</div>
<div class="t " style="left:1289.35px;top:691.12px;font-size:18.7px;line-height:18.7px;color:#606060;font-family:'Liberation Sans', sans-serif;">$62,468</div>
<svg class="b" style="left:1375.5px;top:694.25px" width="14" height="14" viewBox="0 0 14 14" fill="none" stroke="#505050" stroke-width="1.8" stroke-linecap="round" stroke-linejoin="round"><path d="M2.5 1.5l5.5 5.5l-5.5 5.5"/></svg>
<div class="b" style="left:687px;top:729.8px;width:716px;height:41px;background:#fff;border:1px solid #e0e0e0;border-radius:7px"></div>
<div class="t " style="left:701.27px;top:743.15px;font-size:18.7px;line-height:18.7px;color:#606060;font-family:'Liberation Sans', sans-serif;">Coat Closet</div>
<div class="t " style="left:1012.10px;top:743.15px;font-size:18.7px;line-height:18.7px;color:#606060;font-family:'Liberation Sans', sans-serif;">30</div>
<div class="t " style="left:1088.27px;top:743.15px;font-size:18.7px;line-height:18.7px;color:#606060;font-family:'Liberation Sans', sans-serif;">3</div>
<div class="t " style="left:1156.43px;top:743.15px;font-size:18.7px;line-height:18.7px;color:#606060;font-family:'Liberation Sans', sans-serif;">$6,976</div>
<div class="t " style="left:1289.53px;top:743.15px;font-size:18.7px;line-height:18.7px;color:#606060;font-family:'Liberation Sans', sans-serif;">$20,927</div>
<svg class="b" style="left:1375.5px;top:746.28px" width="14" height="14" viewBox="0 0 14 14" fill="none" stroke="#505050" stroke-width="1.8" stroke-linecap="round" stroke-linejoin="round"><path d="M2.5 1.5l5.5 5.5l-5.5 5.5"/></svg>
<div class="b" style="left:687px;top:781.8px;width:716px;height:41px;background:#fff;border:1px solid #e0e0e0;border-radius:7px"></div>
<div class="t " style="left:700.70px;top:795.18px;font-size:18.7px;line-height:18.7px;color:#606060;font-family:'Liberation Sans', sans-serif;">Manager offices</div>
<div class="t " style="left:1001.72px;top:795.18px;font-size:18.7px;line-height:18.7px;color:#606060;font-family:'Liberation Sans', sans-serif;">180</div>
<div class="t " style="left:1077.89px;top:795.18px;font-size:18.7px;line-height:18.7px;color:#606060;font-family:'Liberation Sans', sans-serif;">25</div>
<div class="t " style="left:1146.23px;top:795.18px;font-size:18.7px;line-height:18.7px;color:#606060;font-family:'Liberation Sans', sans-serif;">$15,302</div>
<div class="t " style="left:1278.88px;top:795.18px;font-size:18.7px;line-height:18.7px;color:#606060;font-family:'Liberation Sans', sans-serif;">$382,550</div>
<svg class="b" style="left:1375.5px;top:798.3100000000001px" width="14" height="14" viewBox="0 0 14 14" fill="none" stroke="#505050" stroke-width="1.8" stroke-linecap="round" stroke-linejoin="round"><path d="M2.5 1.5l5.5 5.5l-5.5 5.5"/></svg>
<div class="b" style="left:687px;top:833.8px;width:716px;height:41px;background:#fff;border:1px solid #e0e0e0;border-radius:7px"></div>
<div class="t " style="left:701.36px;top:847.21px;font-size:18.7px;line-height:18.7px;color:#606060;font-family:'Liberation Sans', sans-serif;">Open-address stations</div>
<div class="t " style="left:1012.19px;top:847.21px;font-size:18.7px;line-height:18.7px;color:#606060;font-family:'Liberation Sans', sans-serif;">48</div>
<div class="t " style="left:1067.51px;top:847.21px;font-size:18.7px;line-height:18.7px;color:#606060;font-family:'Liberation Sans', sans-serif;">155</div>
<div class="t " style="left:1156.33px;top:847.21px;font-size:18.7px;line-height:18.7px;color:#606060;font-family:'Liberation Sans', sans-serif;">$1,740</div>
<div class="t " style="left:1278.97px;top:847.21px;font-size:18.7px;line-height:18.7px;color:#606060;font-family:'Liberation Sans', sans-serif;">$269,638</div>
<svg class="b" style="left:1375.5px;top:850.34px" width="14" height="14" viewBox="0 0 14 14" fill="none" stroke="#505050" stroke-width="1.8" stroke-linecap="round" stroke-linejoin="round"><path d="M2.5 1.5l5.5 5.5l-5.5 5.5"/></svg>
<div class="b" style="left:687px;top:885.9px;width:716px;height:41px;background:#ebf3fc;border:1.5px solid #4ea4f4;border-radius:7px"></div>
<div class="t " style="left:700.98px;top:899.24px;font-size:18.7px;line-height:18.7px;color:#2f8fea;font-family:'Liberation Sans', sans-serif;font-weight:700;">Lunch Room</div>
<div class="t " style="left:1001.81px;top:899.24px;font-size:18.7px;line-height:18.7px;color:#2f8fea;font-family:'Liberation Sans', sans-serif;font-weight:700;">800</div>
<div class="t " style="left:1087.99px;top:899.24px;font-size:18.7px;line-height:18.7px;color:#2f8fea;font-family:'Liberation Sans', sans-serif;font-weight:700;">1</div>
<div class="t " style="left:1135.39px;top:899.24px;font-size:18.7px;line-height:18.7px;color:#2f8fea;font-family:'Liberation Sans', sans-serif;font-weight:700;">$107,701</div>
<div class="t " style="left:1278.69px;top:899.24px;font-size:18.7px;line-height:18.7px;color:#2f8fea;font-family:'Liberation Sans', sans-serif;font-weight:700;">$107,701</div>
<svg class="b" style="left:1375.5px;top:902.37px" width="14" height="14" viewBox="0 0 14 14" fill="none" stroke="#505050" stroke-width="1.8" stroke-linecap="round" stroke-linejoin="round"><path d="M2.5 1.5l5.5 5.5l-5.5 5.5"/></svg>
<div class="b" style="left:687px;top:937.9px;width:716px;height:41px;background:#fff;border:1px solid #e0e0e0;border-radius:7px"></div>
<div class="t " style="left:700.70px;top:951.27px;font-size:18.7px;line-height:18.7px;color:#606060;font-family:'Liberation Sans', sans-serif;">Mail Room</div>
<div class="t " style="left:1001.72px;top:951.27px;font-size:18.7px;line-height:18.7px;color:#606060;font-family:'Liberation Sans', sans-serif;">400</div>
<div class="t " style="left:1088.36px;top:951.27px;font-size:18.7px;line-height:18.7px;color:#606060;font-family:'Liberation Sans', sans-serif;">1</div>
<div class="t " style="left:1146.23px;top:951.27px;font-size:18.7px;line-height:18.7px;color:#606060;font-family:'Liberation Sans', sans-serif;">$23,452</div>
<div class="t " style="left:1289.53px;top:951.27px;font-size:18.7px;line-height:18.7px;color:#606060;font-family:'Liberation Sans', sans-serif;">$23,452</div>
<svg class="b" style="left:1375.5px;top:954.4px" width="14" height="14" viewBox="0 0 14 14" fill="none" stroke="#505050" stroke-width="1.8" stroke-linecap="round" stroke-linejoin="round"><path d="M2.5 1.5l5.5 5.5l-5.5 5.5"/></svg>
<div class="b" style="left:687px;top:989.9px;width:716px;height:41px;background:#fff;border:1px solid #e0e0e0;border-radius:7px"></div>
<div class="t " style="left:701.36px;top:1003.30px;font-size:18.7px;line-height:18.7px;color:#606060;font-family:'Liberation Sans', sans-serif;">Storage Room</div>
<div class="t " style="left:1001.72px;top:1003.30px;font-size:18.7px;line-height:18.7px;color:#606060;font-family:'Liberation Sans', sans-serif;">250</div>
<div class="t " style="left:1088.36px;top:1003.30px;font-size:18.7px;line-height:18.7px;color:#606060;font-family:'Liberation Sans', sans-serif;">1</div>
<div class="t " style="left:1146.05px;top:1003.30px;font-size:18.7px;line-height:18.7px;color:#606060;font-family:'Liberation Sans', sans-serif;">$14,596</div>
<div class="t " style="left:1289.35px;top:1003.30px;font-size:18.7px;line-height:18.7px;color:#606060;font-family:'Liberation Sans', sans-serif;">$14,596</div>
<svg class="b" style="left:1375.5px;top:1006.4300000000001px" width="14" height="14" viewBox="0 0 14 14" fill="none" stroke="#505050" stroke-width="1.8" stroke-linecap="round" stroke-linejoin="round"><path d="M2.5 1.5l5.5 5.5l-5.5 5.5"/></svg>
<div class="b" style="left:687px;top:1042.0px;width:716px;height:41px;background:#fff;border:1px solid #e0e0e0;border-radius:7px"></div>
<div class="t " style="left:700.70px;top:1055.33px;font-size:18.7px;line-height:18.7px;color:#606060;font-family:'Liberation Sans', sans-serif;">Filing Room</div>
<div class="t " style="left:1001.72px;top:1055.33px;font-size:18.7px;line-height:18.7px;color:#606060;font-family:'Liberation Sans', sans-serif;">200</div>
<div class="t " style="left:1088.36px;top:1055.33px;font-size:18.7px;line-height:18.7px;color:#606060;font-family:'Liberation Sans', sans-serif;">1</div>
<div class="t " style="left:1146.05px;top:1055.33px;font-size:18.7px;line-height:18.7px;color:#606060;font-family:'Liberation Sans', sans-serif;">$10,823</div>
<div class="t " style="left:1289.35px;top:1055.33px;font-size:18.7px;line-height:18.7px;color:#606060;font-family:'Liberation Sans', sans-serif;">$10,823</div>
<svg class="b" style="left:1375.5px;top:1058.46px" width="14" height="14" viewBox="0 0 14 14" fill="none" stroke="#505050" stroke-width="1.8" stroke-linecap="round" stroke-linejoin="round"><path d="M2.5 1.5l5.5 5.5l-5.5 5.5"/></svg>
<div class="b" style="left:687px;top:1094.0px;width:716px;height:41px;background:#fff;border:1px solid #e0e0e0;border-radius:7px"></div>
<div class="t " style="left:701.36px;top:1107.36px;font-size:18.7px;line-height:18.7px;color:#606060;font-family:'Liberation Sans', sans-serif;">Server / Computer Room</div>
<div class="t " style="left:1001.72px;top:1107.36px;font-size:18.7px;line-height:18.7px;color:#606060;font-family:'Liberation Sans', sans-serif;">200</div>
<div class="t " style="left:1088.36px;top:1107.36px;font-size:18.7px;line-height:18.7px;color:#606060;font-family:'Liberation Sans', sans-serif;">1</div>
<div class="t " style="left:1146.23px;top:1107.36px;font-size:18.7px;line-height:18.7px;color:#606060;font-family:'Liberation Sans', sans-serif;">$19,082</div>
<div class="t " style="left:1289.53px;top:1107.36px;font-size:18.7px;line-height:18.7px;color:#606060;font-family:'Liberation Sans', sans-serif;">$19,082</div>
<svg class="b" style="left:1375.5px;top:1110.49px" width="14" height="14" viewBox="0 0 14 14" fill="none" stroke="#505050" stroke-width="1.8" stroke-linecap="round" stroke-linejoin="round"><path d="M2.5 1.5l5.5 5.5l-5.5 5.5"/></svg>
<div class="b" style="left:687px;top:1146.0px;width:716px;height:41px;background:#fff;border:1px solid #e0e0e0;border-radius:7px"></div>
<div class="t " style="left:701.36px;top:1159.39px;font-size:18.7px;line-height:18.7px;color:#606060;font-family:'Liberation Sans', sans-serif;">Open Collaboration Area</div>
<div class="t " style="left:1012.10px;top:1159.39px;font-size:18.7px;line-height:18.7px;color:#606060;font-family:'Liberation Sans', sans-serif;">80</div>
<div class="t " style="left:1088.36px;top:1159.39px;font-size:18.7px;line-height:18.7px;color:#606060;font-family:'Liberation Sans', sans-serif;">1</div>
<div class="t " style="left:1156.43px;top:1159.39px;font-size:18.7px;line-height:18.7px;color:#606060;font-family:'Liberation Sans', sans-serif;">$2,993</div>
<div class="t " style="left:1299.73px;top:1159.39px;font-size:18.7px;line-height:18.7px;color:#606060;font-family:'Liberation Sans', sans-serif;">$2,993</div>
<svg class="b" style="left:1375.5px;top:1162.52px" width="14" height="14" viewBox="0 0 14 14" fill="none" stroke="#505050" stroke-width="1.8" stroke-linecap="round" stroke-linejoin="round"><path d="M2.5 1.5l5.5 5.5l-5.5 5.5"/></svg>
<div class="b" style="left:687px;top:1198.1px;width:716px;height:41px;background:#fff;border:1px solid #e0e0e0;border-radius:7px"></div>
<div class="t " style="left:702.11px;top:1211.42px;font-size:18.7px;line-height:18.7px;color:#606060;font-family:'Liberation Sans', sans-serif;">Wellness Room</div>
<div class="t " style="left:1011.91px;top:1211.42px;font-size:18.7px;line-height:18.7px;color:#606060;font-family:'Liberation Sans', sans-serif;">64</div>
<div class="t " style="left:1088.36px;top:1211.42px;font-size:18.7px;line-height:18.7px;color:#606060;font-family:'Liberation Sans', sans-serif;">1</div>
<div class="t " style="left:1145.77px;top:1211.42px;font-size:18.7px;line-height:18.7px;color:#606060;font-family:'Liberation Sans', sans-serif;">$24,334</div>
<div class="t " style="left:1289.07px;top:1211.42px;font-size:18.7px;line-height:18.7px;color:#606060;font-family:'Liberation Sans', sans-serif;">$24,334</div>
<svg class="b" style="left:1375.5px;top:1214.5500000000002px" width="14" height="14" viewBox="0 0 14 14" fill="none" stroke="#505050" stroke-width="1.8" stroke-linecap="round" stroke-linejoin="round"><path d="M2.5 1.5l5.5 5.5l-5.5 5.5"/></svg>
<div class="b" style="left:687px;top:1250.1px;width:716px;height:41px;background:#fff;border:1px solid #e0e0e0;border-radius:7px"></div>
<div class="t " style="left:700.70px;top:1263.45px;font-size:18.7px;line-height:18.7px;color:#606060;font-family:'Liberation Sans', sans-serif;">Phone Rooms</div>
<div class="t " style="left:1012.19px;top:1263.45px;font-size:18.7px;line-height:18.7px;color:#606060;font-family:'Liberation Sans', sans-serif;">25</div>
<div class="t " style="left:1088.27px;top:1263.45px;font-size:18.7px;line-height:18.7px;color:#606060;font-family:'Liberation Sans', sans-serif;">6</div>
<div class="t " style="left:1156.43px;top:1263.45px;font-size:18.7px;line-height:18.7px;color:#606060;font-family:'Liberation Sans', sans-serif;">$6,725</div>
<div class="t " style="left:1289.53px;top:1263.45px;font-size:18.7px;line-height:18.7px;color:#606060;font-family:'Liberation Sans', sans-serif;">$40,347</div>
<svg class="b" style="left:1375.5px;top:1266.58px" width="14" height="14" viewBox="0 0 14 14" fill="none" stroke="#505050" stroke-width="1.8" stroke-linecap="round" stroke-linejoin="round"><path d="M2.5 1.5l5.5 5.5l-5.5 5.5"/></svg>
<div class="t " style="left:905.66px;top:1366.62px;font-size:19px;line-height:19px;color:#444;font-family:'Liberation Sans', sans-serif;font-weight:700;letter-spacing:-0.263px;">Room by room construction subtotal</div>
<div class="t " style="left:1243.95px;top:1364.13px;font-size:23px;line-height:23px;color:#222;font-family:'Liberation Sans', sans-serif;font-weight:700;letter-spacing:-0.799px;">$1,446,681</div>
<div class="t " style="left:1455.12px;top:374.32px;font-size:21px;line-height:21px;color:#1e2329;font-family:'Liberation Sans', sans-serif;letter-spacing:0.353px;-webkit-text-stroke:0.35px #1e2329;">Lunch Room</div>
<div class="b" style="left:1457px;top:417.5px;width:234px;height:76.5px;background:#f6f6f6;border-radius:10px"></div>
<div class="t " style="left:1466.32px;top:434.76px;font-size:16px;line-height:16px;color:#858585;font-family:'Liberation Sans', sans-serif;letter-spacing:0.058px;">Room dimension</div>
<div class="t " style="left:1466.85px;top:461.10px;font-size:21.5px;line-height:21.5px;color:#222;font-family:'Liberation Sans', sans-serif;font-weight:700;letter-spacing:0.202px;">20 x 40</div>
<div class="b" style="left:1457px;top:505.7px;width:234px;height:76.5px;background:#f6f6f6;border-radius:10px"></div>
<div class="t " style="left:1466.32px;top:522.96px;font-size:16px;line-height:16px;color:#858585;font-family:'Liberation Sans', sans-serif;letter-spacing:-0.268px;">Room area</div>
<div class="t " style="left:1466.95px;top:549.30px;font-size:21.5px;line-height:21.5px;color:#222;font-family:'Liberation Sans', sans-serif;font-weight:700;letter-spacing:0.754px;">800</div>
<div class="b" style="left:1457px;top:593.8px;width:234px;height:76.5px;background:#f6f6f6;border-radius:10px"></div>
<div class="t " style="left:1466.32px;top:611.06px;font-size:16px;line-height:16px;color:#858585;font-family:'Liberation Sans', sans-serif;letter-spacing:-0.306px;">Lineal feet(LF)</div>
<div class="t " style="left:1466.31px;top:637.40px;font-size:21.5px;line-height:21.5px;color:#222;font-family:'Liberation Sans', sans-serif;font-weight:700;letter-spacing:1.076px;">120</div>
<div class="b" style="left:1457px;top:682px;width:234px;height:76.5px;background:#f6f6f6;border-radius:10px"></div>
<div class="t " style="left:1467.52px;top:699.26px;font-size:16px;line-height:16px;color:#858585;font-family:'Liberation Sans', sans-serif;letter-spacing:0.127px;">Wall Adjustment</div>
<div class="t " style="left:1466.74px;top:725.60px;font-size:21.5px;line-height:21.5px;color:#222;font-family:'Liberation Sans', sans-serif;font-weight:700;letter-spacing:0.006px;">0.5</div>
<div class="t " style="left:1734.67px;top:422.22px;font-size:19px;line-height:19px;color:#444;font-family:'Liberation Sans', sans-serif;font-weight:700;letter-spacing:0.410px;">Item</div>
<div class="t " style="left:2099.88px;top:423.06px;font-size:18px;line-height:18px;color:#444;font-family:'Liberation Sans', sans-serif;font-weight:700;letter-spacing:0.720px;">Qty</div>
<div class="t " style="left:2281.28px;top:423.06px;font-size:18px;line-height:18px;color:#444;font-family:'Liberation Sans', sans-serif;font-weight:700;letter-spacing:-0.420px;">Cost</div>
<div class="t " style="left:2480.73px;top:423.06px;font-size:18px;line-height:18px;color:#444;font-family:'Liberation Sans', sans-serif;font-weight:700;letter-spacing:-0.270px;">Ext</div>
<div class="t " style="left:1734.41px;top:452.26px;font-size:18.6px;line-height:18.6px;color:#7a7a7a;font-family:'Liberation Sans', sans-serif;">Duplex</div>
<div class="t " style="left:2121.62px;top:452.26px;font-size:18.6px;line-height:18.6px;color:#7a7a7a;font-family:'Liberation Sans', sans-serif;">3</div>
<div class="t " style="left:2278.86px;top:452.26px;font-size:18.6px;line-height:18.6px;color:#7a7a7a;font-family:'Liberation Sans', sans-serif;">$285</div>
<div class="t " style="left:2467.36px;top:452.26px;font-size:18.6px;line-height:18.6px;color:#7a7a7a;font-family:'Liberation Sans', sans-serif;">$855</div>
<div class="b" style="left:1724px;top:477.3px;width:795px;height:31.3px;background:#f6f6f6"></div>
<div class="t " style="left:1735.06px;top:483.56px;font-size:18.6px;line-height:18.6px;color:#7a7a7a;font-family:'Liberation Sans', sans-serif;">Quad</div>
<div class="t " style="left:2121.71px;top:483.56px;font-size:18.6px;line-height:18.6px;color:#7a7a7a;font-family:'Liberation Sans', sans-serif;">1</div>
<div class="t " style="left:2278.77px;top:483.56px;font-size:18.6px;line-height:18.6px;color:#7a7a7a;font-family:'Liberation Sans', sans-serif;">$300</div>
<div class="t " style="left:2467.27px;top:483.56px;font-size:18.6px;line-height:18.6px;color:#7a7a7a;font-family:'Liberation Sans', sans-serif;">$300</div>
<div class="t " style="left:1734.97px;top:514.86px;font-size:18.6px;line-height:18.6px;color:#7a7a7a;font-family:'Liberation Sans', sans-serif;">GFI</div>
<div class="t " style="left:2121.62px;top:514.86px;font-size:18.6px;line-height:18.6px;color:#7a7a7a;font-family:'Liberation Sans', sans-serif;">3</div>
<div class="t " style="left:2278.86px;top:514.86px;font-size:18.6px;line-height:18.6px;color:#7a7a7a;font-family:'Liberation Sans', sans-serif;">$315</div>
<div class="t " style="left:2467.36px;top:514.86px;font-size:18.6px;line-height:18.6px;color:#7a7a7a;font-family:'Liberation Sans', sans-serif;">$945</div>
<div class="b" style="left:1724px;top:539.9px;width:795px;height:31.3px;background:#f6f6f6"></div>
<div class="t " style="left:1734.41px;top:546.16px;font-size:18.6px;line-height:18.6px;color:#7a7a7a;font-family:'Liberation Sans', sans-serif;">Dedicated</div>
<div class="t " style="left:2121.34px;top:546.16px;font-size:18.6px;line-height:18.6px;color:#7a7a7a;font-family:'Liberation Sans', sans-serif;">4</div>
<div class="t " style="left:2278.77px;top:546.16px;font-size:18.6px;line-height:18.6px;color:#7a7a7a;font-family:'Liberation Sans', sans-serif;">$640</div>
<div class="t " style="left:2451.73px;top:546.16px;font-size:18.6px;line-height:18.6px;color:#7a7a7a;font-family:'Liberation Sans', sans-serif;">$2,560</div>
<div class="t " style="left:1734.41px;top:577.46px;font-size:18.6px;line-height:18.6px;color:#7a7a7a;font-family:'Liberation Sans', sans-serif;">Data</div>
<div class="t " style="left:2121.81px;top:577.46px;font-size:18.6px;line-height:18.6px;color:#7a7a7a;font-family:'Liberation Sans', sans-serif;">2</div>
<div class="t " style="left:2278.86px;top:577.46px;font-size:18.6px;line-height:18.6px;color:#7a7a7a;font-family:'Liberation Sans', sans-serif;">$225</div>
<div class="t " style="left:2467.27px;top:577.46px;font-size:18.6px;line-height:18.6px;color:#7a7a7a;font-family:'Liberation Sans', sans-serif;">$450</div>
<div class="b" style="left:1724px;top:602.5px;width:795px;height:31.3px;background:#f6f6f6"></div>
<div class="t " style="left:1735.06px;top:608.76px;font-size:18.6px;line-height:18.6px;color:#7a7a7a;font-family:'Liberation Sans', sans-serif;">Switches</div>
<div class="t " style="left:2121.71px;top:608.76px;font-size:18.6px;line-height:18.6px;color:#7a7a7a;font-family:'Liberation Sans', sans-serif;">1</div>
<div class="t " style="left:2278.86px;top:608.76px;font-size:18.6px;line-height:18.6px;color:#7a7a7a;font-family:'Liberation Sans', sans-serif;">$225</div>
<div class="t " style="left:2467.36px;top:608.76px;font-size:18.6px;line-height:18.6px;color:#7a7a7a;font-family:'Liberation Sans', sans-serif;">$225</div>
<div class="t " style="left:1735.06px;top:640.06px;font-size:18.6px;line-height:18.6px;color:#7a7a7a;font-family:'Liberation Sans', sans-serif;">Sprinkler</div>
<div class="t " style="left:2121.34px;top:640.06px;font-size:18.6px;line-height:18.6px;color:#7a7a7a;font-family:'Liberation Sans', sans-serif;">4</div>
<div class="t " style="left:2278.77px;top:640.06px;font-size:18.6px;line-height:18.6px;color:#7a7a7a;font-family:'Liberation Sans', sans-serif;">$300</div>
<div class="t " style="left:2451.73px;top:640.06px;font-size:18.6px;line-height:18.6px;color:#7a7a7a;font-family:'Liberation Sans', sans-serif;">$1,200</div>
<div class="b" style="left:1724px;top:665.1px;width:795px;height:31.3px;background:#f6f6f6"></div>
<div class="t " style="left:1734.97px;top:671.36px;font-size:18.6px;line-height:18.6px;color:#7a7a7a;font-family:'Liberation Sans', sans-serif;">Core</div>
<div class="t " style="left:2121.53px;top:671.36px;font-size:18.6px;line-height:18.6px;color:#7a7a7a;font-family:'Liberation Sans', sans-serif;">0</div>
<div class="t " style="left:2263.23px;top:671.36px;font-size:18.6px;line-height:18.6px;color:#7a7a7a;font-family:'Liberation Sans', sans-serif;">$3,060</div>
<div class="t " style="left:2488.00px;top:671.36px;font-size:18.6px;line-height:18.6px;color:#7a7a7a;font-family:'Liberation Sans', sans-serif;">$0</div>
<div class="t " style="left:1734.41px;top:702.66px;font-size:18.6px;line-height:18.6px;color:#7a7a7a;font-family:'Liberation Sans', sans-serif;">LS-HS</div>
<div class="t " style="left:2121.71px;top:702.66px;font-size:18.6px;line-height:18.6px;color:#7a7a7a;font-family:'Liberation Sans', sans-serif;">1</div>
<div class="t " style="left:2278.77px;top:702.66px;font-size:18.6px;line-height:18.6px;color:#7a7a7a;font-family:'Liberation Sans', sans-serif;">$850</div>
<div class="t " style="left:2467.27px;top:702.66px;font-size:18.6px;line-height:18.6px;color:#7a7a7a;font-family:'Liberation Sans', sans-serif;">$850</div>
<div class="b" style="left:1724px;top:727.7px;width:795px;height:31.3px;background:#f6f6f6"></div>
<div class="t " style="left:1734.41px;top:733.96px;font-size:18.6px;line-height:18.6px;color:#7a7a7a;font-family:'Liberation Sans', sans-serif;">HVAC Zone</div>
<div class="t " style="left:2121.71px;top:733.96px;font-size:18.6px;line-height:18.6px;color:#7a7a7a;font-family:'Liberation Sans', sans-serif;">1</div>
<div class="t " style="left:2263.23px;top:733.96px;font-size:18.6px;line-height:18.6px;color:#7a7a7a;font-family:'Liberation Sans', sans-serif;">$5,500</div>
<div class="t " style="left:2451.73px;top:733.96px;font-size:18.6px;line-height:18.6px;color:#7a7a7a;font-family:'Liberation Sans', sans-serif;">$5,500</div>
<div class="t " style="left:1468.97px;top:792.92px;font-size:19px;line-height:19px;color:#444;font-family:'Liberation Sans', sans-serif;font-weight:700;letter-spacing:0.743px;">Item</div>
<div class="t " style="left:2339.73px;top:794.19px;font-size:17.5px;line-height:17.5px;color:#444;font-family:'Liberation Sans', sans-serif;font-weight:700;">Cost</div>
<div class="t " style="left:2471.76px;top:794.19px;font-size:17.5px;line-height:17.5px;color:#444;font-family:'Liberation Sans', sans-serif;font-weight:700;">Ext</div>
<div class="b" style="left:1457px;top:820.5px;width:1056px;height:2px;background:#a5a5a5"></div>
<div class="b" style="left:2513px;top:780px;width:6px;height:425px;background:#d0d0d0;border-radius:3px"></div>
<div class="t " style="left:1469.00px;top:838.74px;font-size:18.5px;line-height:18.5px;color:#777;font-family:'Liberation Sans', sans-serif;font-weight:700;letter-spacing:-0.032px;">Flooring (800 USF)</div>
<div class="t " style="left:1468.72px;top:861.04px;font-size:18.5px;line-height:18.5px;color:#858585;font-family:'Liberation Sans', sans-serif;letter-spacing:0.055px;">LVT material only allowance of $10.00 / square foot.</div>
<div class="t " style="left:2320.41px;top:850.12px;font-size:19px;line-height:19px;color:#666;font-family:'Liberation Sans', sans-serif;font-weight:700;letter-spacing:0.121px;">$10.22</div>
<div class="t " style="left:2441.62px;top:850.12px;font-size:19px;line-height:19px;color:#666;font-family:'Liberation Sans', sans-serif;font-weight:700;letter-spacing:-0.058px;">$8,176</div>
<div class="b" style="left:1457px;top:895.4px;width:1056px;height:1px;background:#e6e6e6"></div>
<div class="t " style="left:1470.20px;top:911.64px;font-size:18.5px;line-height:18.5px;color:#777;font-family:'Liberation Sans', sans-serif;font-weight:700;letter-spacing:0.341px;">Walls (60 ft)</div>
<div class="t " style="left:1470.11px;top:933.94px;font-size:18.5px;line-height:18.5px;color:#858585;font-family:'Liberation Sans', sans-serif;letter-spacing:-0.007px;">VWC ($9/yard MOA) one wall, primer and 2 coats BM on other walls.</div>
<div class="t " style="left:2336.62px;top:923.02px;font-size:19px;line-height:19px;color:#666;font-family:'Liberation Sans', sans-serif;font-weight:700;letter-spacing:-0.005px;">$165</div>
<div class="t " style="left:2441.62px;top:923.02px;font-size:19px;line-height:19px;color:#666;font-family:'Liberation Sans', sans-serif;font-weight:700;letter-spacing:-0.039px;">$9,900</div>
<div class="b" style="left:1457px;top:968.3px;width:1056px;height:1px;background:#e6e6e6"></div>
<div class="t " style="left:1469.00px;top:984.54px;font-size:18.5px;line-height:18.5px;color:#777;font-family:'Liberation Sans', sans-serif;font-weight:700;letter-spacing:0.149px;">Lighting (8 ea)</div>
<div class="t " style="left:1468.72px;top:1006.84px;font-size:18.5px;line-height:18.5px;color:#858585;font-family:'Liberation Sans', sans-serif;letter-spacing:-0.123px;">Furnish and install 3.5" downlights, Focal Point FLC3D / LC3, or equivalent.</div>
<div class="t " style="left:2336.62px;top:995.92px;font-size:19px;line-height:19px;color:#666;font-family:'Liberation Sans', sans-serif;font-weight:700;letter-spacing:0.090px;">$780</div>
<div class="t " style="left:2441.62px;top:995.92px;font-size:19px;line-height:19px;color:#666;font-family:'Liberation Sans', sans-serif;font-weight:700;letter-spacing:-0.039px;">$6,240</div>
<div class="b" style="left:1457px;top:1041.2px;width:1056px;height:1px;background:#e6e6e6"></div>
<div class="t " style="left:1469.46px;top:1057.44px;font-size:18.5px;line-height:18.5px;color:#777;font-family:'Liberation Sans', sans-serif;font-weight:700;letter-spacing:-0.081px;">Ceiling (800 USF)</div>
<div class="t " style="left:1468.72px;top:1079.74px;font-size:18.5px;line-height:18.5px;color:#858585;font-family:'Liberation Sans', sans-serif;">Painted drywall, 5/8" on metal studs, secured above.</div>
<div class="t " style="left:2331.32px;top:1068.82px;font-size:19px;line-height:19px;color:#666;font-family:'Liberation Sans', sans-serif;font-weight:700;letter-spacing:0.015px;">$15.5</div>
<div class="t " style="left:2430.72px;top:1068.82px;font-size:19px;line-height:19px;color:#666;font-family:'Liberation Sans', sans-serif;font-weight:700;letter-spacing:0.027px;">$12,400</div>
<div class="b" style="left:1457px;top:1114.1px;width:1056px;height:1px;background:#e6e6e6"></div>
<div class="t " style="left:1469.00px;top:1130.34px;font-size:18.5px;line-height:18.5px;color:#777;font-family:'Liberation Sans', sans-serif;font-weight:700;letter-spacing:0.460px;">Millwork (20 ea)</div>
<div class="t " style="left:1469.09px;top:1152.64px;font-size:18.5px;line-height:18.5px;color:#858585;font-family:'Liberation Sans', sans-serif;letter-spacing:-0.088px;">(20) LF of b/u cabinets, solid surface counter and backsplash ($8.00 sf MOA).</div>
<div class="t " style="left:2336.62px;top:1141.72px;font-size:19px;line-height:19px;color:#666;font-family:'Liberation Sans', sans-serif;font-weight:700;letter-spacing:-0.005px;">$565</div>
<div class="t " style="left:2430.72px;top:1141.72px;font-size:19px;line-height:19px;color:#666;font-family:'Liberation Sans', sans-serif;font-weight:700;letter-spacing:0.201px;">$11,300</div>
<div class="b" style="left:1457px;top:1187.0px;width:1056px;height:1px;background:#e6e6e6"></div>
<div class="t " style="left:1469.74px;top:1203.24px;font-size:18.5px;line-height:18.5px;color:#777;font-family:'Liberation Sans', sans-serif;font-weight:700;letter-spacing:-0.098px;">Appliances (1 ea)</div>
<div class="t " style="left:1470.20px;top:1225.54px;font-size:18.5px;line-height:18.5px;color:#858585;font-family:'Liberation Sans', sans-serif;letter-spacing:0.067px;">Allowance of $11,000 for appliances and installation.</div>
<div class="t " style="left:2310.32px;top:1214.62px;font-size:19px;line-height:19px;color:#666;font-family:'Liberation Sans', sans-serif;font-weight:700;letter-spacing:0.201px;">$11,000</div>
<div class="t " style="left:2430.72px;top:1214.62px;font-size:19px;line-height:19px;color:#666;font-family:'Liberation Sans', sans-serif;font-weight:700;letter-spacing:0.201px;">$11,000</div>
<div class="b" style="left:1457px;top:1259.9px;width:1056px;height:1px;background:#e6e6e6"></div>
<div class="t " style="left:1469.00px;top:1276.14px;font-size:18.5px;line-height:18.5px;color:#777;font-family:'Liberation Sans', sans-serif;font-weight:700;letter-spacing:0.127px;">Pendant R3 (5200 ea)</div>
<div class="t " style="left:1470.20px;top:1298.44px;font-size:18.5px;line-height:18.5px;color:#858585;font-family:'Liberation Sans', sans-serif;letter-spacing:0.074px;">Allow $5200 for pendant or linear fixture(s) over break room table(s).</div>
<div class="t " style="left:2357.62px;top:1287.52px;font-size:19px;line-height:19px;color:#666;font-family:'Liberation Sans', sans-serif;font-weight:700;letter-spacing:0.170px;">$1</div>
<div class="t " style="left:2441.62px;top:1287.52px;font-size:19px;line-height:19px;color:#666;font-family:'Liberation Sans', sans-serif;font-weight:700;letter-spacing:-0.039px;">$5,200</div>
<div class="b" style="left:1457px;top:1332.8px;width:1056px;height:1px;background:#e6e6e6"></div>
<div class="b" style="left:1457px;top:1333px;width:1056px;height:20px;overflow:hidden">
<div class="t " style="left:11.53px;top:15.26px;font-size:18px;line-height:18px;color:#777;font-family:'Liberation Sans', sans-serif;font-weight:700;">Plumbing (N ea)</div>
</div>
<div class="b" style="left:1457px;top:1352.5px;width:1062px;height:1.5px;background:#aaa"></div>
<div class="t " style="left:2137.23px;top:1367.42px;font-size:19px;line-height:19px;color:#444;font-family:'Liberation Sans', sans-serif;font-weight:700;letter-spacing:-0.234px;">Single room construction total</div>
<div class="t " style="left:2428.61px;top:1366.99px;font-size:19.5px;line-height:19.5px;color:#222;font-family:'Liberation Sans', sans-serif;letter-spacing:-0.220px;">$107,701</div>
</body></html>
